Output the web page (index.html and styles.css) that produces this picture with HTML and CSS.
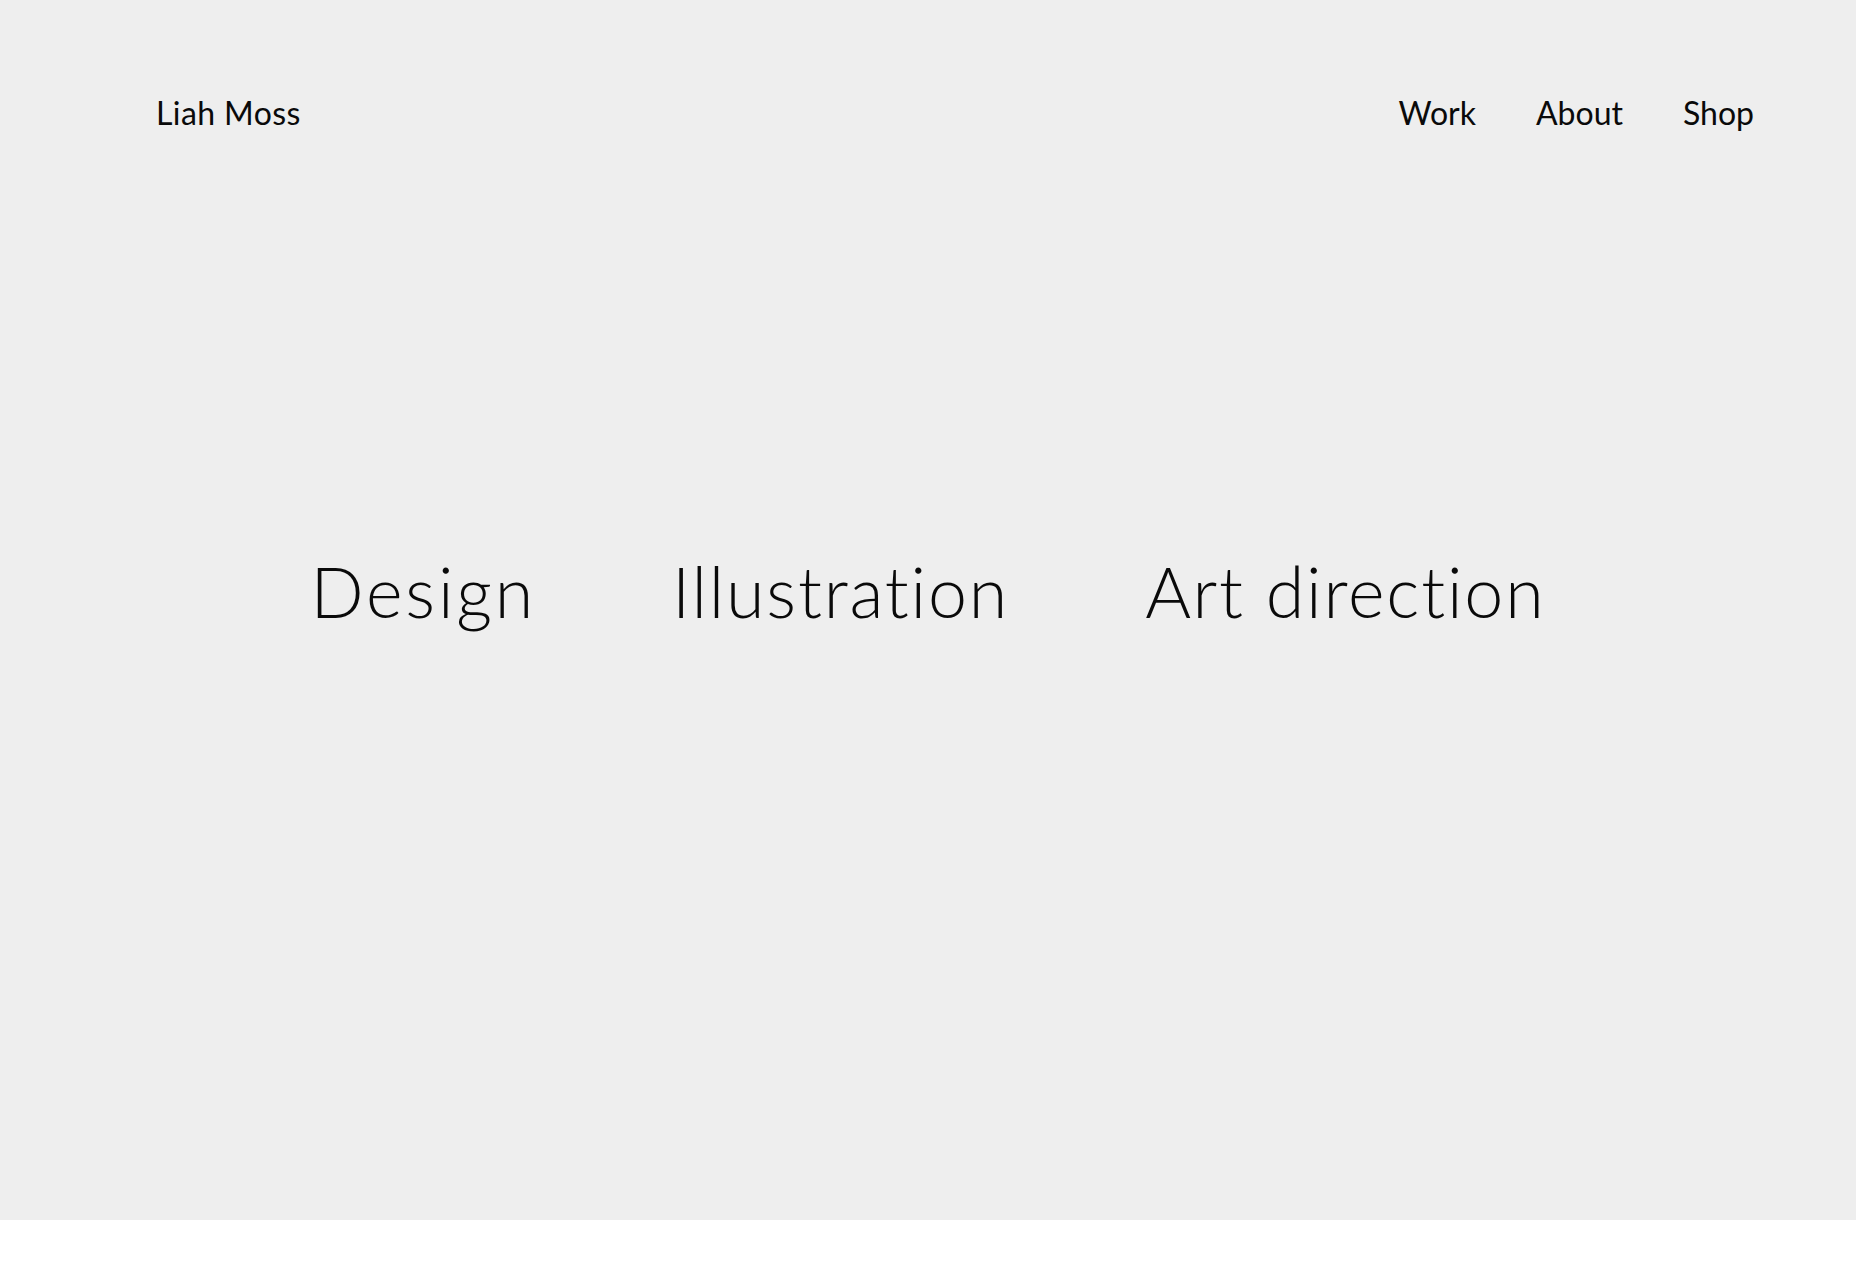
FILE: index.html
```html
<!DOCTYPE html>
<html lang="en">
<head>
<meta charset="utf-8">
<title>Liah Moss</title>
<link rel="stylesheet" href="styles.css">
</head>
<body>
<section class="hero">
  <header class="site-header">
    <a class="logo" href="#">Liah Moss</a>
    <nav class="nav">
      <a href="#">Work</a>
      <a href="#">About</a>
      <a href="#">Shop</a>
    </nav>
  </header>
  <main class="disciplines">
    <span class="design">Design</span>
    <span>Illustration</span>
    <span>Art direction</span>
  </main>
</section>
<div class="below"></div>
</body>
</html>
```

FILE: styles.css
```css
html, body {
  margin: 0;
  padding: 0;
  background: #ffffff;
}
body {
  font-family: Lato, "Open Sans", sans-serif;
  color: #0a0a0a;
  font-variant-ligatures: none;
}
a {
  color: inherit;
  text-decoration: none;
}
.hero {
  background: #eeeeee;
  height: 1220px;
  display: flex;
  flex-direction: column;
}
.site-header {
  display: flex;
  justify-content: space-between;
  align-items: center;
  padding: 93px 102px 0 156px;
  font-size: 32px;
  line-height: 40px;
  font-weight: 400;
}
.logo {
  letter-spacing: 0.4px;
}
.nav {
  display: flex;
  gap: 60px;
}
.disciplines {
  display: flex;
  justify-content: center;
  gap: 136px;
  padding-top: 424px;
  font-size: 70px;
  line-height: 68px;
  font-weight: 300;
  letter-spacing: 1.8px;
}
.design {
  letter-spacing: 2.8px;
}
```
